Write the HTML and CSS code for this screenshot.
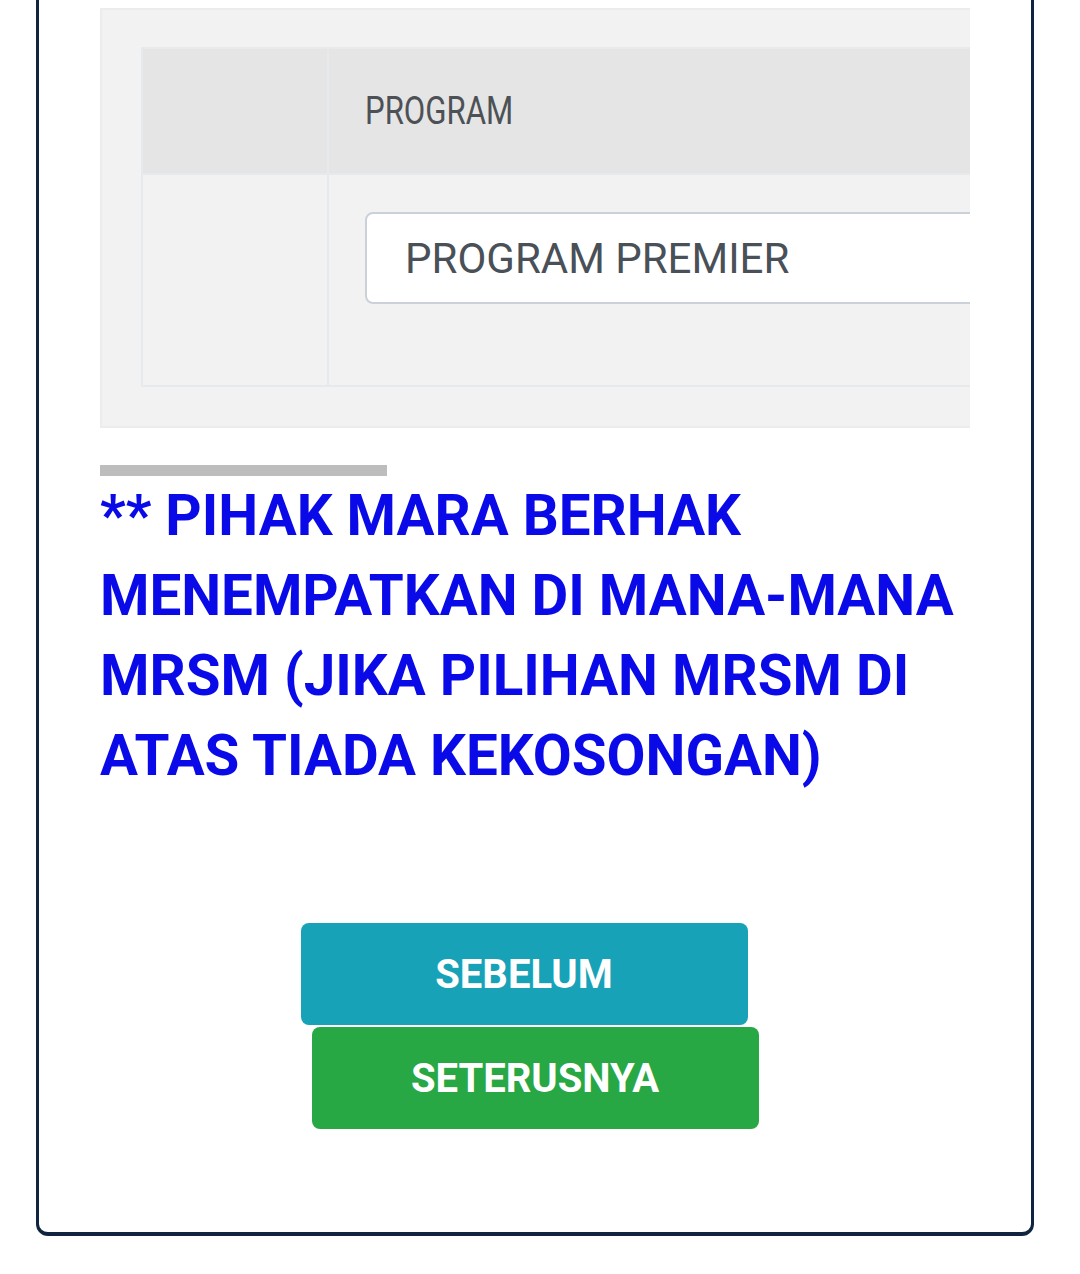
FILE: index.html
```html
<!DOCTYPE html>
<html lang="ms">
<head>
    <meta charset="UTF-8">
    <meta name="viewport" content="width=device-width, initial-scale=1.0">
    <title>Pilihan Program</title>
    <link rel="stylesheet" href="styles.css">
</head>
<body>
    <div class="form-card">
        <div class="table-scroll">
            <div class="table-panel">
                <table class="choice-table">
                    <colgroup>
                        <col class="col-no">
                        <col class="col-program">
                    </colgroup>
                    <thead>
                        <tr>
                            <th></th>
                            <th><span class="th-label">PROGRAM</span></th>
                        </tr>
                    </thead>
                    <tbody>
                        <tr>
                            <td></td>
                            <td>
                                <input type="text" class="program-input" value="PROGRAM PREMIER" readonly>
                            </td>
                        </tr>
                    </tbody>
                </table>
            </div>
        </div>

        <div class="divider"></div>
        <h2 class="notice">** PIHAK MARA BERHAK MENEMPATKAN DI MANA-MANA MRSM (JIKA PILIHAN MRSM DI ATAS TIADA KEKOSONGAN)</h2>

        <div class="nav-buttons">
            <button class="btn btn-prev">SEBELUM</button>
            <button class="btn btn-next">SETERUSNYA</button>
        </div>
    </div>
</body>
</html>
```

FILE: styles.css
```css
body {
    margin: 0;
    padding: 0 46px 0 36px;
    background: #fff;
    font-family: Roboto, "Noto Sans", Arial, sans-serif;
    overflow: hidden;
}
.form-card {
    margin-top: -20px;
    border: 3px solid #10243f;
    border-bottom-width: 4px;
    border-radius: 12px;
    padding: 25px 61px 103px;
    background: #fff;
}
.table-scroll {
    overflow: hidden;
}
.table-panel {
    width: 1400px;
    background: #f2f2f2;
    border: 2px solid #ececec;
    padding: 37px 39px 39px;
}
.choice-table {
    border-collapse: collapse;
    table-layout: fixed;
    width: 1300px;
    border: 2px solid #e7eaed;
}
.col-no {
    width: 186px;
}
.choice-table th,
.choice-table td {
    border: 2px solid #e7eaed;
    text-align: left;
    vertical-align: middle;
}
.choice-table thead th {
    background: #e5e5e5;
    height: 124px;
    padding: 0 36px;
    font-weight: 400;
}
.th-label {
    display: inline-block;
    font-size: 38px;
    color: #4d5156;
    transform: scaleX(0.82);
    transform-origin: left center;
}
.choice-table tbody td {
    padding: 37px 36px 81px;
}
.program-input {
    display: block;
    box-sizing: border-box;
    width: 800px;
    height: 92px;
    border: 2px solid #cbd1d8;
    border-radius: 8px;
    background: #fff;
    padding: 0 38px;
    font-family: Roboto, "Noto Sans", Arial, sans-serif;
    font-size: 42px;
    color: #495057;
    outline: none;
}
.divider {
    width: 287px;
    height: 11px;
    background: #bdbdbd;
    margin-top: 37px;
}
.notice {
    margin: 0 0 127px;
    font-size: 56.5px;
    line-height: 80px;
    font-weight: 700;
    color: #0a0ae8;
}
.nav-buttons {
    display: flex;
    flex-direction: column;
    align-items: center;
    gap: 2px;
}
.btn {
    width: 447px;
    height: 102px;
    border: none;
    border-radius: 8px;
    color: #fff;
    font-family: Roboto, "Noto Sans", Arial, sans-serif;
    font-size: 40px;
    font-weight: 700;
    cursor: pointer;
}
.btn-prev {
    background: #17a2b8;
    margin-right: 22px;
}
.btn-next {
    background: #28a745;
}
```
